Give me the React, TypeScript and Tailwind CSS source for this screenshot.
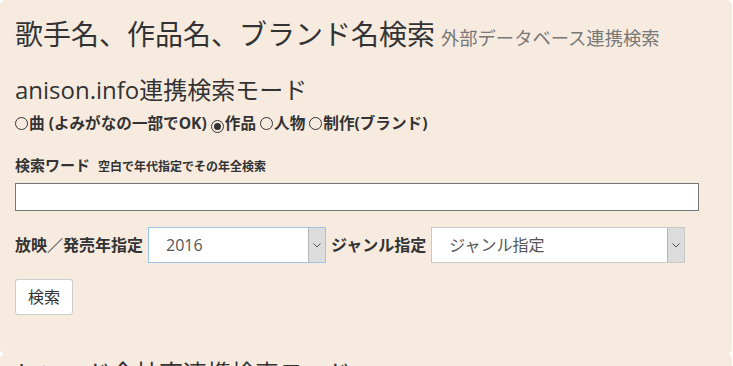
import React from 'react';

const FONT = { fontFamily: '"Open Sans", "Noto Sans CJK JP", sans-serif' };

const Radio = ({ checked }: { checked?: boolean }) => (
  <span className="inline-flex w-[13px] h-[13px] rounded-full border border-[#333] items-center justify-center mr-[1px] align-[-1px]">
    {checked && <span className="w-[7px] h-[7px] rounded-full bg-[#333]" />}
  </span>
);

const Select = ({ value, width, focus }: { value: string; width: string; focus?: boolean }) => (
  <div className={`flex h-[36px] bg-white border ${focus ? 'border-[#9cc3ea]' : 'border-[#c8c8c8]'} ${width}`}>
    <div className="flex-1 pl-[17px] flex items-center text-[16px] text-[#555]">{value}</div>
    <div className="w-[17px] bg-[#dcdcdc] border-l border-[#b5b5b5] flex items-center justify-center">
      <svg width="8" height="5" viewBox="0 0 8 5">
        <path d="M0.5 0.5 L4 4 L7.5 0.5" fill="none" stroke="#555" strokeWidth="1" />
      </svg>
    </div>
  </div>
);

export default function App() {
  return (
    <div className="bg-white w-[733px] h-[366px] overflow-hidden text-[#333]" style={FONT}>
      <div className="bg-[#f7ebe0] rounded-[5px] w-[732px] px-[15px] pt-[16px] h-[354px]">
        <h1 className="flex items-baseline gap-[6px] leading-[36px]">
          <span className="text-[28px]">歌手名、作品名、ブランド名検索</span>
          <span className="text-[18.3px] text-[#777]">外部データベース連携検索</span>
        </h1>
        <h2 className="text-[24px] leading-[32px] mt-[18px]">anison.info連携検索モード</h2>
        <div className="text-[15.6px] font-bold mt-[6px] leading-[22px]">
          <Radio />曲 (よみがなの一部でOK) <Radio checked />作品 <Radio />人物 <Radio />制作(ブランド)
        </div>
        <div className="mt-[20px] flex items-baseline gap-[8px] h-[22px] leading-[22px]">
          <span className="text-[15px] font-bold">検索ワード</span>
          <span className="text-[12px] font-bold">空白で年代指定でその年全検索</span>
        </div>
        <input className="block w-[684px] h-[28px] bg-white border border-[#777] mt-[7px] outline-none" />
        <div className="flex items-center mt-[16px]">
          <span className="text-[16px] font-bold mr-[5px]">放映／発売年指定</span>
          <Select value="2016" width="w-[178px]" focus />
          <span className="text-[16px] font-bold ml-[5px] mr-[5px]">ジャンル指定</span>
          <Select value="ジャンル指定" width="w-[254px]" />
        </div>
        <button className="block mt-[16px] w-[58px] h-[36px] bg-white border border-[#ccc] rounded-[3px] text-[16px] text-[#333]">検索</button>
      </div>
      <div className="bg-[#f7ebe0] rounded-t-[5px] w-[732px] px-[15px] pt-[3px] h-[20px]">
        <h2 className="text-[24px] leading-[32px]">レコード会社直連携検索モード</h2>
      </div>
    </div>
  );
}
